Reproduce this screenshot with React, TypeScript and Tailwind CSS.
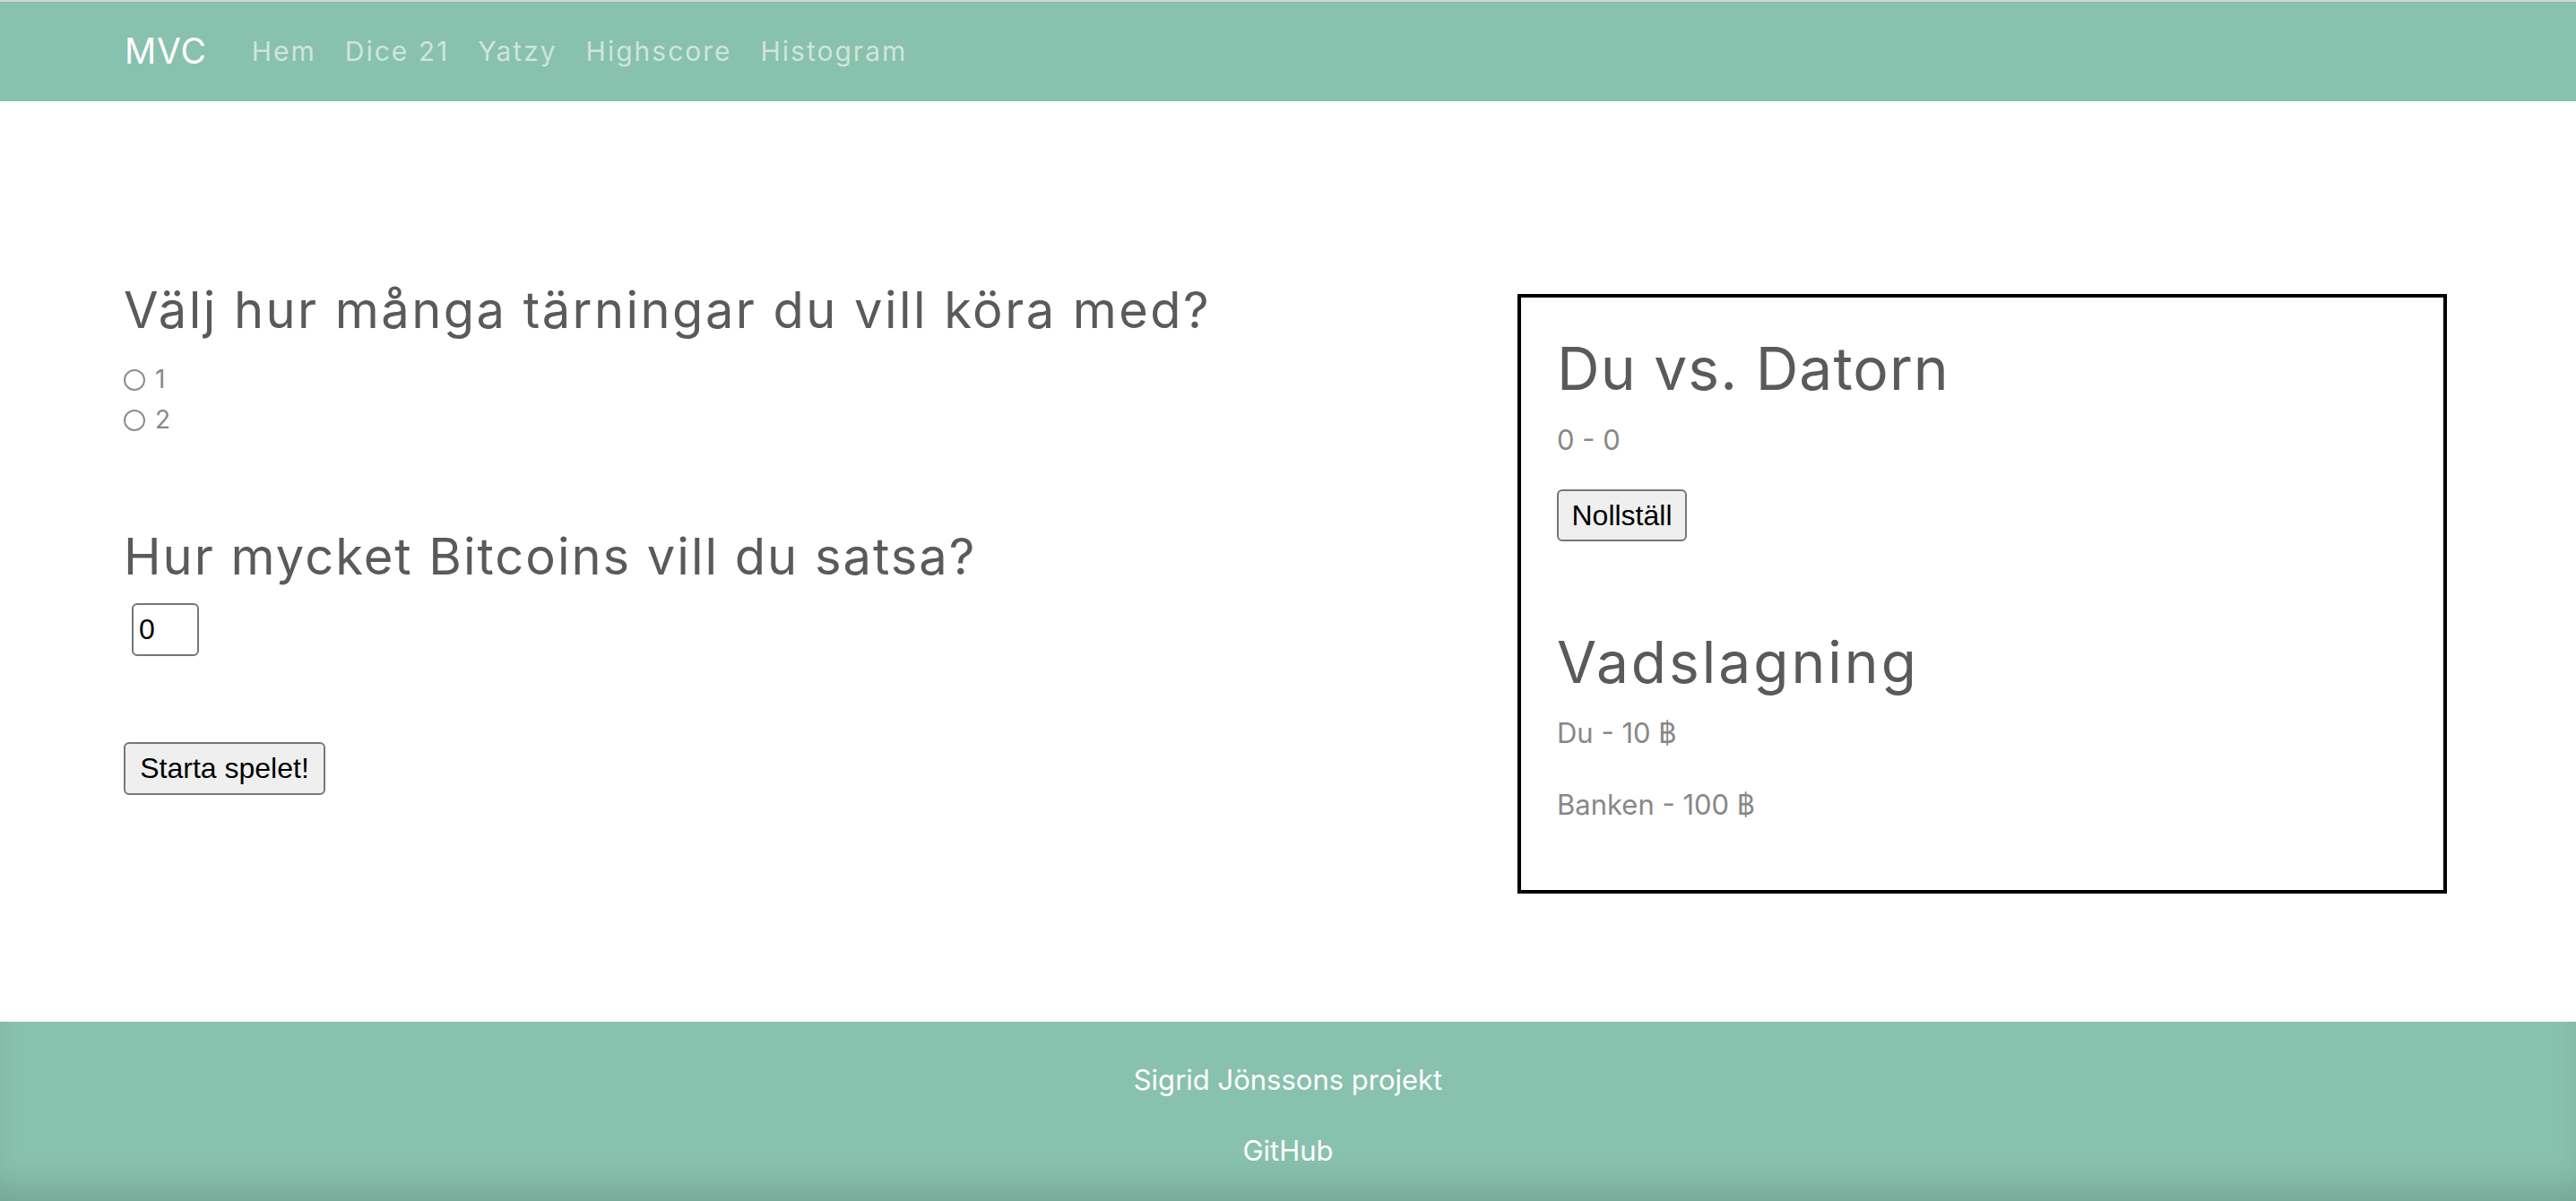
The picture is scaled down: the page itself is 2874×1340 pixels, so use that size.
import React from 'react';

const NAV_LINKS = ['Hem', 'Dice 21', 'Yatzy', 'Highscore', 'Histogram'];

const HEADING = "font-['Inter',sans-serif] text-[#5a5a5a] font-normal";
const BODY = "font-['Inter',sans-serif] text-[#888888]";
const NATIVE_BTN =
  "font-['Liberation_Sans',Arial,sans-serif] text-[32px] leading-[37px] text-black bg-[#efefef] border-2 border-[#767676] rounded-[6px]";

function Radio({ label }: { label: string }) {
  return (
    <label className="flex items-center h-[45px] gap-[11px]">
      <span className="w-[24px] h-[24px] rounded-full border-2 border-[#8e8e8e] bg-white" />
      <span className={`${BODY} text-[28px] leading-[45px]`}>{label}</span>
    </label>
  );
}

function Navbar() {
  return (
    <nav className="h-[111px] bg-[#88c1ad] flex items-center pl-[139px]">
      <span className="font-['Inter',sans-serif] text-[39px] text-white tracking-[0.8px] mr-[50px]">MVC</span>
      <div className="flex items-center gap-[32px]">
        {NAV_LINKS.map((link) => (
          <span
            key={link}
            className="font-['Inter',sans-serif] text-[30px] tracking-[2px] text-white/60"
          >
            {link}
          </span>
        ))}
      </div>
    </nav>
  );
}

function ScoreBox() {
  return (
    <div className="w-[1037px] mt-[215px] border-[4px] border-black pt-[40px] pl-[40px] pb-[72px]">
      <h2 className={`${HEADING} text-[66px] leading-[79px] tracking-[1px]`}>Du vs. Datorn</h2>
      <p className={`${BODY} text-[31px] leading-[46px] mt-[17px]`}>0 - 0</p>
      <button className={`${NATIVE_BTN} h-[58px] w-[145px] mt-[32px]`}>Nollställ</button>

      <h2 className={`${HEADING} text-[64px] leading-[74px] tracking-[3px] mt-[98px]`}>Vadslagning</h2>
      <p className={`${BODY} text-[31px] leading-[46px] mt-[19px]`}>Du - 10 ฿</p>
      <p className={`${BODY} text-[31px] leading-[46px] mt-[34px]`}>Banken - 100 ฿</p>
    </div>
  );
}

export default function App() {
  return (
    <div className="min-h-screen flex flex-col bg-white border-t-2 border-[#d4d4d4]">
      <Navbar />

      <main className="flex-1 flex items-start justify-between pl-[138px] pr-[144px]">
        <div className="flex flex-col items-start">
          <h3 className={`${HEADING} text-[56px] leading-[65px] tracking-[2.45px] mt-[201px]`}>
            Välj hur många tärningar du vill köra med?
          </h3>
          <div className="mt-[22px] flex flex-col">
            <Radio label="1" />
            <Radio label="2" />
          </div>

          <h3 className={`${HEADING} text-[56px] leading-[65px] tracking-[2px] mt-[98px]`}>
            Hur mycket Bitcoins vill du satsa?
          </h3>
          <input
            type="text"
            defaultValue="0"
            className="ml-[9px] mt-[19px] w-[75px] h-[59px] border-2 border-[#767676] rounded-[6px] px-[6px] font-['Liberation_Sans',Arial,sans-serif] text-[32px] text-black outline-none"
          />

          <button className={`${NATIVE_BTN} h-[59px] w-[225px] mt-[96px]`}>Starta spelet!</button>
        </div>

        <ScoreBox />
      </main>

      <footer className="h-[200px] bg-[#88c1ad] flex flex-col items-center pt-[41px] shadow-[inset_0_-30px_40px_-18px_rgba(0,0,0,0.16)]">
        <p className="font-['Inter',sans-serif] text-[31px] leading-[48px] text-white">Sigrid Jönssons projekt</p>
        <p className="font-['Inter',sans-serif] text-[31px] leading-[48px] text-white mt-[31px]">GitHub</p>
      </footer>
    </div>
  );
}
